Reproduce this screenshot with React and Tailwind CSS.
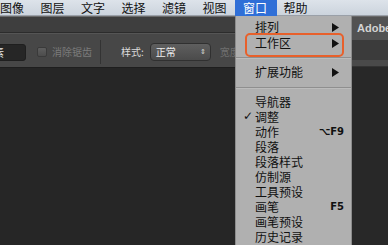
import React from "react";

const cjk = "font-['Noto_Sans_CJK_SC','Noto_Sans',sans-serif]";

function Arrow() {
  return (
    <svg width="7" height="9" viewBox="0 0 7 9" className="mr-[5px]">
      <path d="M0 0 L7 4.5 L0 9 Z" fill="#111" />
    </svg>
  );
}

function Row({ label, right, check, tall }) {
  const h = tall ? "h-[16px]" : "h-[15px]";
  const lh = tall ? "leading-[16px]" : "leading-[15px]";
  return (
    <div className={`relative flex items-center ${h} pl-[19px] pr-[7px]`}>
      {check && (
        <span className="absolute left-[7px] top-[0px] text-[12px] leading-[15px] font-bold text-[#111] font-['DejaVu_Sans',sans-serif]">
          ✓
        </span>
      )}
      <span className={`flex-1 text-[12px] ${lh} h-full text-[#111]`}>{label}</span>
      {right}
    </div>
  );
}

function Sep({ cls }) {
  return (
    <div className={`flex flex-col ${cls}`}>
      <div className="h-[1px] bg-[#8f8f8f]" />
      <div className="h-[1px] bg-[#bcbcbc]" />
    </div>
  );
}

export default function App() {
  const menus = ["图像", "图层", "文字", "选择", "滤镜", "视图"];
  return (
    <div className={`relative w-[388px] h-[245px] overflow-hidden bg-[#262626] flex flex-col ${cjk}`}>
      {/* menubar */}
      <div className="h-[16px] shrink-0 flex items-center gap-[16.5px] bg-gradient-to-b from-[#dde3ea] to-[#ccd4dd] border-b border-[#9aa0a8]">
        {menus.map((m) => (
          <span key={m} className="w-[24px] text-[12px] leading-[14px] text-[#111] whitespace-nowrap">
            {m}
          </span>
        ))}
        <span className="-ml-[8px] -mr-[10px] pl-[8px] pr-[10px] h-[16px] flex items-center bg-[#2f6fd7] text-white text-[12px] leading-[14px] whitespace-nowrap">
          窗口
        </span>
        <span className="w-[24px] text-[12px] leading-[14px] text-[#111] whitespace-nowrap">帮助</span>
      </div>

      {/* body */}
      <div className="flex flex-1">
        <div className="flex-1 flex flex-col">
          <div className="h-[17px] bg-[#3e3e3e] border-t border-[#6a6a6a] border-b border-b-[#2c2c2c]" />
          <div className="h-[34px] bg-[#474747] border-t border-[#555] flex items-center whitespace-nowrap">
            <div className="-ml-[22px] w-[48px] h-[17px] mt-[3px] rounded-[3px] bg-[#262626] border border-[#1f1f1f] flex items-center pl-[3px] text-[11px] leading-[13px] text-[#e6e6e6]">
              像素
            </div>
            <div className="ml-[11px] mt-[3px] w-[10px] h-[10px] rounded-[2px] border border-[#3a3a3a] bg-gradient-to-b from-[#5e5e5e] to-[#4c4c4c]" />
            <span className="ml-[5px] mt-[3px] text-[10px] leading-[12px] text-[#7b7b7b]">消除锯齿</span>
            <div className="ml-[8px] w-[1px] h-[24px] mt-[3px] bg-[#333]" />
            <span className="ml-[20px] mt-[3px] text-[10px] leading-[12px] text-[#dcdcdc]">样式:</span>
            <div className="ml-[6px] mt-[3px] w-[61px] h-[18px] rounded-[4px] border border-[#303030] bg-gradient-to-b from-[#5f5f5f] to-[#4b4b4b] flex items-center pl-[5px] pr-[4px] text-[10px] leading-[12px] text-[#eee]">
              <span className="flex-1">正常</span>
              <span className="text-[7px] leading-none font-['DejaVu_Sans',sans-serif] text-[#ddd]">⇕</span>
            </div>
            <span className="ml-[9px] mt-[3px] text-[10px] leading-[12px] text-[#6f6f6f]">宽度</span>
          </div>
          <div className="flex-1 bg-[#262626] border-t border-[#1e1e1e]" />
        </div>
        <div className="w-[36px] flex flex-col">
          <div className="h-[24px] bg-[#525252] flex items-center pl-[5px] text-[11px] font-bold text-[#d4d4d4] font-['Liberation_Sans',sans-serif] whitespace-nowrap border-t border-[#6a6a6a]">
            Adobe
          </div>
          <div className="h-[20px] bg-[#3b3b3b]" />
          <div className="h-[7px] bg-[#4a4a4a] border-b border-[#333]" />
          <div className="flex-1 bg-[#282828]" />
        </div>
      </div>

      {/* dropdown menu */}
      <div className="absolute left-[235px] top-[16px] w-[117px] h-[240px] bg-[#b0b0b0] border-x border-[#8c8c8c] pt-[3px] flex flex-col">
        <Row label="排列" tall right={<Arrow />} />
        <Row label="工作区" tall right={<Arrow />} />
        <Sep cls="mt-[6px] mb-[5px]" />
        <Row label="扩展功能" tall right={<Arrow />} />
        <Sep cls="mt-[7px] mb-[5px]" />
        <Row label="导航器" />
        <Row label="调整" check />
        <Row
          label="动作"
          right={<span className="text-[10px] leading-[12px] font-bold text-[#111] font-['DejaVu_Sans',sans-serif]">⌥F9</span>}
        />
        <Row label="段落" />
        <Row label="段落样式" />
        <Row label="仿制源" />
        <Row label="工具预设" />
        <Row
          label="画笔"
          right={<span className="text-[10px] leading-[12px] font-bold text-[#111] font-['DejaVu_Sans',sans-serif]">F5</span>}
        />
        <Row label="画笔预设" />
        <Row label="历史记录" />
        <Row label="路径" />
        <div className="absolute left-[9px] top-[17px] w-[99px] h-[24px] rounded-[5px] border-2 border-[#e8602b]" />
      </div>
    </div>
  );
}
